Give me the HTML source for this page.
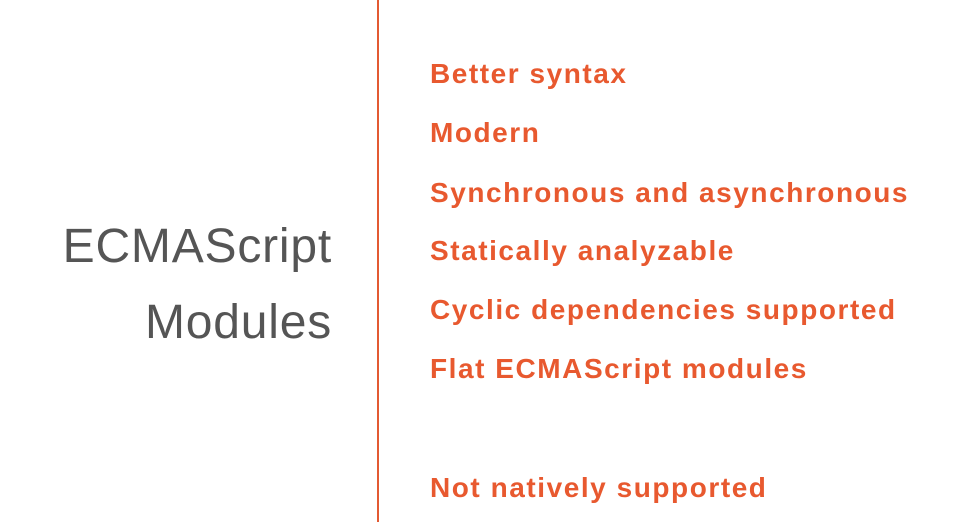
<!DOCTYPE html>
<html><head><style>
html,body{margin:0;padding:0;background:#fff;width:960px;height:522px;overflow:hidden;position:relative;font-family:"Liberation Sans",sans-serif}
.vl{position:absolute;left:377px;top:0;width:2px;height:522px;background:#E35A33}
.t{position:absolute;right:628px;font-size:48px;color:#555;font-weight:300;white-space:nowrap;line-height:1;letter-spacing:0.8px}
.i{position:absolute;left:430px;font-size:28px;font-weight:bold;color:#E8592F;white-space:nowrap;line-height:1;letter-spacing:1.55px}
</style></head><body>
<div class="vl"></div>
<div class="t" style="top:223px">ECMAScript</div>
<div class="t" style="top:299px">Modules</div>
<div class="i" style="top:60px">Better syntax</div>
<div class="i" style="top:119px">Modern</div>
<div class="i" style="top:179px">Synchronous and asynchronous</div>
<div class="i" style="top:237px">Statically analyzable</div>
<div class="i" style="top:296px">Cyclic dependencies supported</div>
<div class="i" style="top:355px">Flat ECMAScript modules</div>
<div class="i" style="top:474px">Not natively supported</div>
</body></html>
